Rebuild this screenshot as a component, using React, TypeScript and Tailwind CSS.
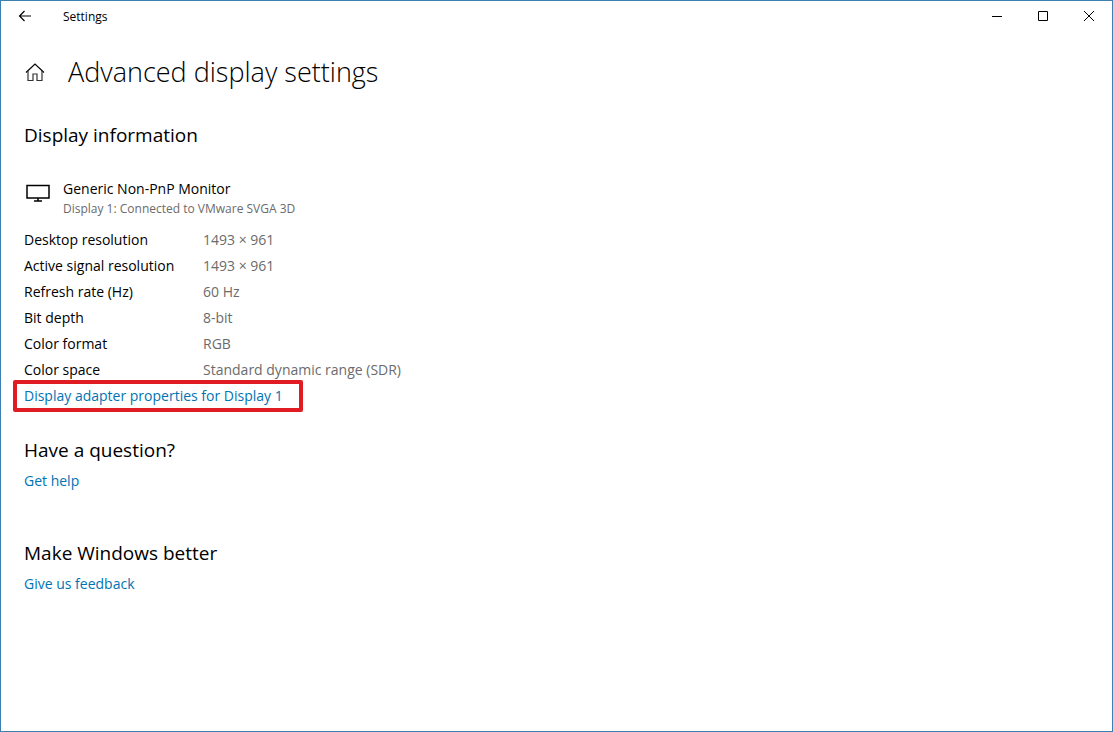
import React from 'react';

const details = [
  { label: 'Desktop resolution', value: '1493 × 961' },
  { label: 'Active signal resolution', value: '1493 × 961' },
  { label: 'Refresh rate (Hz)', value: '60 Hz' },
  { label: 'Bit depth', value: '8-bit' },
  { label: 'Color format', value: 'RGB' },
  { label: 'Color space', value: 'Standard dynamic range (SDR)' },
];

const linkGroups = [
  { title: 'Have a question?', link: 'Get help' },
  { title: 'Make Windows better', link: 'Give us feedback' },
];

const TitleBar: React.FC = () => (
  <header className="flex h-8">
    <button aria-label="Back" className="flex h-[30px] w-12 items-center justify-center hover:bg-gray-100">
      <svg width="14" height="12" viewBox="0 0 14 12" fill="none" stroke="currentColor" strokeWidth="1.2">
        <path d="M13 6H1.5M6.500 1L1.500 6l5 5" />
      </svg>
    </button>
    <span className="ml-3.5 text-[12px] leading-8">Settings</span>

    <div className="ml-auto flex">
      <button aria-label="Minimize" className="flex h-[30px] w-[46px] items-center justify-center hover:bg-gray-200">
        <svg width="10" height="10" viewBox="0 0 10 10" fill="none" stroke="currentColor">
          <path d="M0 5.5h10" />
        </svg>
      </button>
      <button aria-label="Maximize" className="flex h-[30px] w-[46px] items-center justify-center hover:bg-gray-200">
        <svg width="10" height="10" viewBox="0 0 10 10" fill="none" stroke="currentColor">
          <path d="M.5 .5h9v9h-9z" />
        </svg>
      </button>
      <button aria-label="Close" className="flex h-[30px] w-[46px] items-center justify-center hover:bg-red-600 hover:text-white">
        <svg width="10" height="10" viewBox="0 0 10 10" fill="none" stroke="currentColor">
          <path d="M0 0l10 10M10 0L0 10" />
        </svg>
      </button>
    </div>
  </header>
);

const App: React.FC = () => {
  return (
    <div className="flex min-h-screen flex-col border border-[#3c7fb1] bg-white font-['Open_Sans','Noto_Sans',sans-serif] text-black">
      <TitleBar />

      <main className="px-[23px]">
        <div className="flex h-[78px] items-center gap-5">
          <a href="#home" aria-label="Home" className="w-6">
            <svg className="ml-px" width="20" height="20" viewBox="0 0 20 20" fill="none" stroke="currentColor" strokeWidth="1.2">
              <path d="M1 10.5L10 2l9 8.5" />
              <path d="M3 8.8v9.700h5v-6.500h4v6.500h5V8.800" stroke="#333" />
            </svg>
          </a>
          <h1 className="text-[27px] font-light">Advanced display settings</h1>
        </div>

        <section>
          <h2 className="mt-2.5 text-[19px] leading-7">Display information</h2>

          <div className="mt-[30px] flex gap-3">
            <svg className="mt-1 ml-px" width="26" height="20" viewBox="0 0 26 20" fill="none" stroke="currentColor" strokeWidth="1.5">
              <path d="M2 2.500h22v12.500H2zM13 15v3M9 18h8" />
            </svg>
            <div>
              <p className="text-[14px] leading-5">Generic Non-PnP Monitor</p>
              <p className="text-[12px] leading-5 text-[#6b6b6b]">Display 1: Connected to VMware SVGA 3D</p>
            </div>
          </div>

          <table className="mt-2 text-[14px] leading-5">
            <tbody>
              {details.map((item) => (
                <tr key={item.label}>
                  <th scope="row" className="w-[179px] py-[3px] text-left font-normal">{item.label}</th>
                  <td className="py-[3px] text-[#6b6b6b]">{item.value}</td>
                </tr>
              ))}
            </tbody>
          </table>

          {/* Highlighted link */}
          <a
            href="#adapter"
            className="-mt-[3px] -ml-[11px] flex w-[290px] items-center rounded-xs border-4 border-[#e11b22] px-[7px] py-0.5 text-[14px] leading-5 text-[#0073b3] hover:text-gray-500"
          >
            Display adapter properties for Display 1
          </a>
        </section>

        {linkGroups.map((group) => (
          <section key={group.title} className="mt-6 mb-[47px]">
            <h2 className="text-[19px] leading-7">{group.title}</h2>
            <a href="#support" className="mt-[7px] inline-block text-[14px] leading-5 text-[#0073b3] hover:text-gray-500">
              {group.link}
            </a>
          </section>
        ))}
      </main>
    </div>
  );
};

export default App;
